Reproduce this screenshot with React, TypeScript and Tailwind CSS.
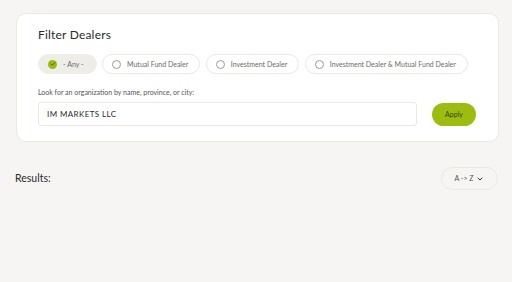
import { ChevronDown, Check } from "lucide-react";

const options = [
  { label: "- Any -", checked: true },
  { label: "Mutual Fund Dealer", checked: false },
  { label: "Investment Dealer", checked: false },
  { label: "Investment Dealer & Mutual Fund Dealer", checked: false },
];

const App = () => {
  return (
    <div className="w-[512px] h-[282px] bg-[#f6f5f3] pt-[13px] pl-[16px] pr-[13px] font-['Lato',sans-serif] text-[#2a2a2a] overflow-hidden">
      <div className="bg-white border border-[#ebe8e2] rounded-[10px] pt-[13px] pl-[21px] pr-[22px] pb-[15px]">
        <h2 className="text-[12px] leading-[16px] text-[#2b2b2b] tracking-[0.2px]">Filter Dealers</h2>

        <div className="flex items-center gap-[5.5px] mt-[11px]">
          {options.map((opt) => (
            <button
              key={opt.label}
              className={
                opt.checked
                  ? "shrink-0 whitespace-nowrap h-[20px] flex items-center gap-[6px] pl-[9px] pr-[12px] rounded-full bg-[#efede8] border border-[#efede8] text-[7px] text-[#6b6b6b]"
                  : "shrink-0 whitespace-nowrap h-[20px] flex items-center gap-[6px] pl-[9px] pr-[11px] rounded-full bg-white border border-[#e9e7e2] text-[7px] text-[#6b6b6b]"
              }
            >
              {opt.checked ? (
                <span className="w-[9px] h-[9px] rounded-full bg-[#9cbc12] flex items-center justify-center">
                  <Check size={6} strokeWidth={3} className="text-[#3f4a05]" />
                </span>
              ) : (
                <span className="w-[9px] h-[9px] rounded-full border border-[#9a9a9a] bg-white" />
              )}
              {opt.label}
            </button>
          ))}
        </div>

        <p className="text-[7px] leading-[10px] text-[#555] mt-[13px]">
          Look for an organization by name, province, or city:
        </p>

        <div className="flex items-center gap-[15px] mt-[5px]">
          <div className="flex-1 h-[24px] border border-[#ebe8e2] rounded-[3px] flex items-center pl-[8px] text-[8px] text-[#2b2b2b] tracking-[0.4px]">
            IM MARKETS LLC
          </div>
          <button className="w-[44px] h-[23px] rounded-full bg-[#9cbd10] text-[7px] text-[#3a3f10]">
            Apply
          </button>
        </div>
      </div>

      <div className="flex items-center justify-between mt-[25px] pr-[1px]">
        <span className="text-[10.5px] text-[#2b2b2b] -ml-[1px]">Results:</span>
        <button className="h-[23px] w-[57px] rounded-full border border-[#ebe8e2] flex items-center justify-center gap-[3px] text-[7px] text-[#555]">
          A -&gt; Z
          <ChevronDown size={8} strokeWidth={3} className="text-[#333]" />
        </button>
      </div>
    </div>
  );
};

export default App;
